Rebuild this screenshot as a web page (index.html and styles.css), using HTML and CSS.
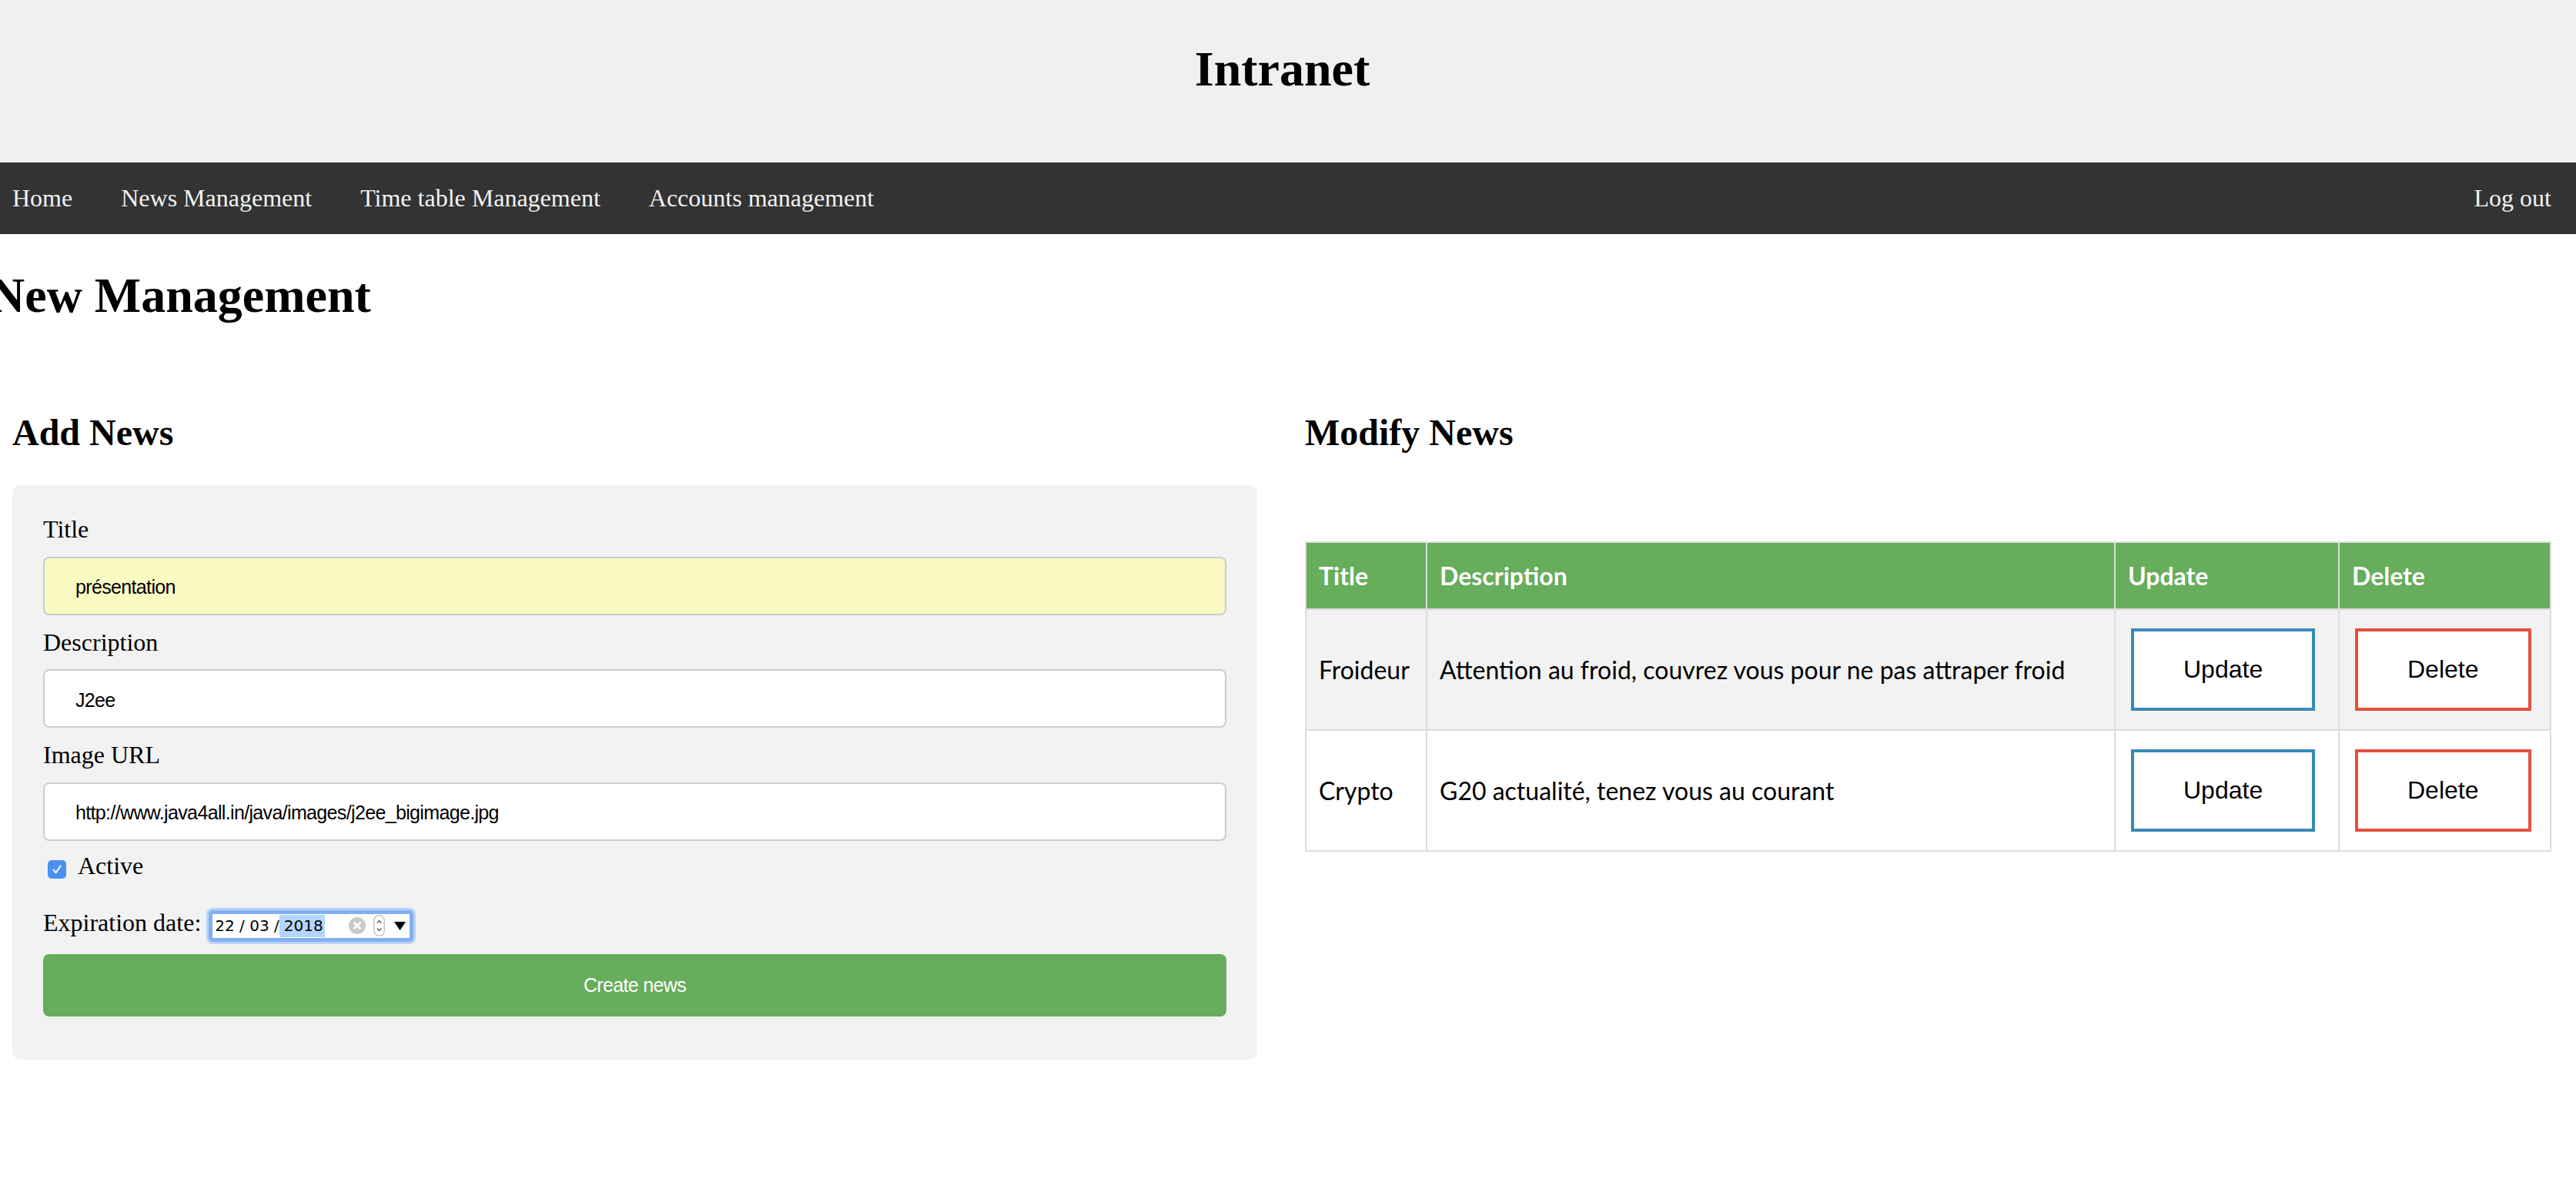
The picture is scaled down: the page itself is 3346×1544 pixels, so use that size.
FILE: index.html
```html
<!DOCTYPE html>
<html lang="fr">
<head>
<meta charset="utf-8">
<title>Intranet</title>
<link rel="stylesheet" href="styles.css">
</head>
<body>
<header class="site-header">
  <h1 class="site-title">Intranet</h1>
</header>
<nav class="topnav">
  <div class="nav-left">
    <a href="#">Home</a>
    <a href="#">News Management</a>
    <a href="#">Time table Management</a>
    <a href="#">Accounts management</a>
  </div>
  <a href="#" class="nav-right">Log out</a>
</nav>
<main class="page">
  <h1 class="page-title">New Management</h1>
  <div class="columns">
    <section class="col">
      <h2 class="section-title">Add News</h2>
      <form class="panel">
        <label class="field-label">Title</label>
        <input class="text-input autofill" type="text" value="présentation">
        <label class="field-label">Description</label>
        <input class="text-input" type="text" value="J2ee">
        <label class="field-label">Image URL</label>
        <input class="text-input" type="text" value="http://www.java4all.in/java/images/j2ee_bigimage.jpg">
        <div class="check-row">
          <span class="checkbox"><svg width="24" height="24" viewBox="0 0 24 24"><path d="M7.5 12.5 L10.5 16.5 L16.5 7.5" fill="none" stroke="#fff" stroke-width="2" stroke-linecap="round" stroke-linejoin="round"/></svg></span>
          <span>Active</span>
        </div>
        <div class="date-row">
          <span class="date-label">Expiration date:</span>
          <div class="date-box">
            <span class="date-text">22 / 03 /</span><span class="date-sel">2018</span>
            <div class="date-controls">
              <svg class="date-clear" width="22" height="22" viewBox="0 0 22 22"><circle cx="11" cy="11" r="11" fill="#c9c9c9"/><path d="M7.3 7.3 L14.7 14.7 M14.7 7.3 L7.3 14.7" stroke="#fff" stroke-width="2.6" stroke-linecap="round"/></svg>
              <svg class="date-spin" width="15" height="28" viewBox="0 0 15 28"><rect x="0.75" y="0.75" width="13.5" height="26.5" rx="6.75" fill="#fff" stroke="#c6c6c6" stroke-width="1.5"/><path d="M4.8 10.5 L7.5 7.5 L10.2 10.5 M4.8 17.5 L7.5 20.5 L10.2 17.5" fill="none" stroke="#555" stroke-width="1.2"/></svg>
              <svg class="date-drop" width="15" height="11" viewBox="0 0 15 11"><polygon points="0,0 15,0 7.5,11" fill="#000"/></svg>
            </div>
          </div>
        </div>
        <button class="create-btn" type="button">Create news</button>
      </form>
    </section>
    <section class="col">
      <h2 class="section-title">Modify News</h2>
      <table class="news-table">
        <colgroup>
          <col class="c-title">
          <col class="c-desc">
          <col class="c-update">
          <col class="c-delete">
        </colgroup>
        <tr>
          <th>Title</th>
          <th>Description</th>
          <th>Update</th>
          <th>Delete</th>
        </tr>
        <tr class="alt">
          <td>Froideur</td>
          <td>Attention au froid, couvrez vous pour ne pas attraper froid</td>
          <td><button class="btn btn-update" type="button">Update</button></td>
          <td><button class="btn btn-delete" type="button">Delete</button></td>
        </tr>
        <tr>
          <td>Crypto</td>
          <td>G20 actualité, tenez vous au courant</td>
          <td><button class="btn btn-update" type="button">Update</button></td>
          <td><button class="btn btn-delete" type="button">Delete</button></td>
        </tr>
      </table>
    </section>
  </div>
</main>
</body>
</html>
```

FILE: styles.css
```css
* {
  box-sizing: border-box;
}

html,
body {
  margin: 0;
  padding: 0;
  background: #fff;
}

body {
  font-family: "Liberation Serif", "Times New Roman", serif;
  font-size: 32px;
  color: #000;
}

/* Header */
.site-header {
  background: #f0f0f0;
  height: 211px;
  padding-top: 53px;
  padding-right: 15px;
}

.site-title {
  margin: 0;
  font-size: 64px;
  line-height: 74px;
  font-weight: bold;
  text-align: center;
}

/* Navigation */
.topnav {
  background: #333;
  height: 93px;
  display: flex;
  justify-content: space-between;
  align-items: flex-start;
  padding: 28px 32px 0 16px;
}

.topnav a {
  color: #f2f2f2;
  text-decoration: none;
  font-size: 32px;
  line-height: 37px;
}

.nav-left {
  display: flex;
  gap: 63px;
}

/* Page */
.page {
  padding: 0 32px 0 16px;
}

.page-title {
  margin: 43px 0 0 -30px;
  font-size: 64px;
  line-height: 74px;
  font-weight: bold;
}

.columns {
  display: grid;
  grid-template-columns: 1fr 1fr;
  column-gap: 62px;
  margin-top: 113px;
}

.section-title {
  margin: 0;
  font-size: 48px;
  line-height: 55px;
  font-weight: bold;
}

/* Form panel */
.panel {
  margin-top: 41px;
  background: #f2f2f2;
  border-radius: 10px;
  padding: 38px 40px 40px;
}

.field-label {
  display: block;
  font-size: 32px;
  line-height: 38.5px;
}

.text-input {
  display: block;
  width: 100%;
  height: 76px;
  margin: 16px 0;
  padding: 4px 40px 0;
  border: 2px solid #ccc;
  border-radius: 8px;
  background: #fff;
  color: #000;
  font-family: "Liberation Sans", Arial, sans-serif;
  font-size: 25px;
  letter-spacing: -0.65px;
  outline: none;
}

.text-input.autofill {
  background: #fafbc3;
}

.check-row {
  display: flex;
  align-items: flex-start;
  height: 37px;
  line-height: 32px;
}

.checkbox {
  width: 24px;
  height: 24px;
  margin: 9px 15px 0 6px;
  border-radius: 5px;
  background: #4a8ff2;
  display: flex;
  align-items: center;
  justify-content: center;
}

.checkbox svg {
  display: block;
}

.date-row {
  display: flex;
  align-items: flex-start;
  margin-top: 37px;
  height: 41px;
  line-height: 32px;
}

.date-label {
  margin-right: 10px;
}

.date-box {
  display: flex;
  align-items: center;
  width: 266px;
  height: 41px;
  border: 5px solid #83b0f1;
  box-shadow: 0 0 0 3px #b9d3f7;
  border-radius: 5px;
  background: #fff;
  padding: 0 5px 0 3px;
  font-family: "DejaVu Sans", sans-serif;
  font-size: 20px;
  line-height: 29px;
  white-space: pre;
}

.date-sel {
  background: #b4d5fd;
  padding: 0 2px 0 6px;
}

.date-controls {
  margin-left: auto;
  display: flex;
  align-items: center;
}

.date-controls svg {
  display: block;
}

.date-clear {
  margin-right: 10px;
}

.date-spin {
  margin-right: 12px;
}

.create-btn {
  display: block;
  width: 100%;
  height: 81px;
  margin: 16px 0;
  border: none;
  border-radius: 8px;
  background: #66ad5c;
  color: #fff;
  font-family: "Liberation Sans", Arial, sans-serif;
  font-size: 25px;
  letter-spacing: -0.65px;
}

/* Table */
.news-table {
  width: 100%;
  margin-top: 114px;
  border-collapse: collapse;
  table-layout: fixed;
  font-family: Lato, "Liberation Sans", sans-serif;
  font-size: 32px;
}

.c-title { width: 157px; }
.c-desc { width: 894px; }
.c-update { width: 291px; }
.c-delete { width: 275px; }

.news-table th,
.news-table td {
  border: 2px solid #ddd;
  padding: 16px;
  text-align: left;
}

.news-table th {
  padding-top: 24px;
  padding-bottom: 24px;
  line-height: 37px;
  background: #66ad5c;
  color: #fff;
  font-weight: bold;
}

.news-table tr.alt {
  background: #f2f2f2;
}

.btn {
  display: inline-block;
  margin: 8px 4px;
  padding: 32px 64px;
  background: #fff;
  color: #000;
  font-family: "Liberation Sans", Arial, sans-serif;
  font-size: 32px;
  line-height: 35px;
  border: 4px solid;
}

.btn-update {
  border-color: #3a88b8;
}

.btn-delete {
  border-color: #e3503f;
}
```
